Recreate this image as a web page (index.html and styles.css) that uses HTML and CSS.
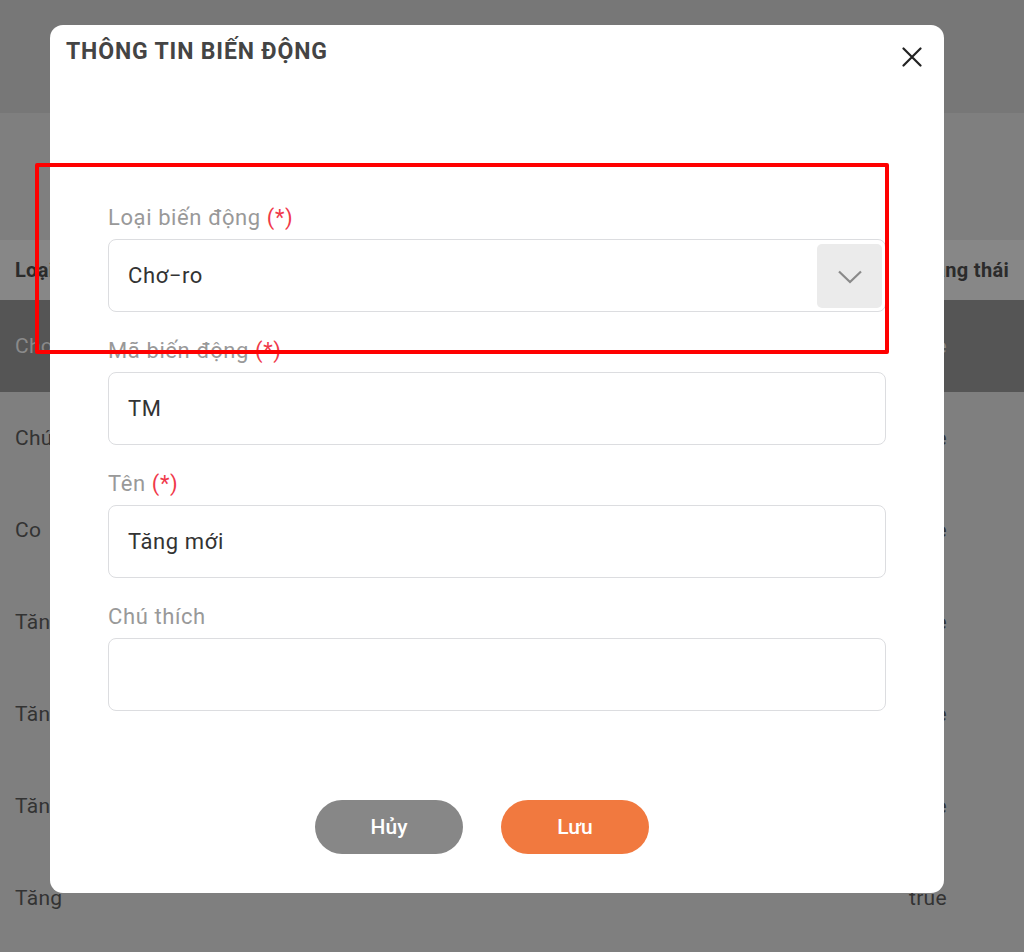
FILE: index.html
```html
<!DOCTYPE html>
<html lang="vi">
<head>
<meta charset="utf-8">
<title>Thông tin biến động</title>
<link rel="stylesheet" href="styles.css">
</head>
<body>
<div class="page">
  <div class="topbar"></div>
  <div class="filters"></div>
  <div class="table">
    <div class="row head"><span class="c1">Loại biến động</span><span class="c2">Trạng thái</span></div>
    <div class="row selected"><span class="c1">Chơ−ro</span><span class="c2">true</span></div>
    <div class="row"><span class="c1">Chú thích</span><span class="c2">true</span></div>
    <div class="row"><span class="c1">Co</span><span class="c2">true</span></div>
    <div class="row"><span class="c1">Tăng mới</span><span class="c2">true</span></div>
    <div class="row"><span class="c1">Tăng khác</span><span class="c2">true</span></div>
    <div class="row"><span class="c1">Tăng</span><span class="c2">true</span></div>
    <div class="row"><span class="c1">Tăng</span><span class="c2">true</span></div>
  </div>
</div>

<div class="modal">
  <div class="modal-head">
    <h2 class="modal-title">THÔNG TIN BIẾN ĐỘNG</h2>
    <button class="close" aria-label="Đóng">
      <svg width="20" height="20" viewBox="0 0 20 20"><path d="M1.5 1.5 L18.5 18.5 M18.5 1.5 L1.5 18.5" stroke="#222" stroke-width="2.2" fill="none" stroke-linecap="round"/></svg>
    </button>
  </div>
  <form class="form">
    <div class="field">
      <label class="label">Loại biến động <span class="req">(*)</span></label>
      <div class="input select">
        <span class="value">Chơ−ro</span>
        <span class="drop">
          <svg width="26" height="16" viewBox="0 0 26 16"><path d="M2 2.5 L13 13 L24 2.5" stroke="#8a8a8a" stroke-width="2.2" fill="none"/></svg>
        </span>
      </div>
    </div>
    <div class="field">
      <label class="label">Mã biến động <span class="req">(*)</span></label>
      <div class="input"><span class="value">TM</span></div>
    </div>
    <div class="field">
      <label class="label">Tên <span class="req">(*)</span></label>
      <div class="input"><span class="value">Tăng mới</span></div>
    </div>
    <div class="field">
      <label class="label">Chú thích</label>
      <div class="input"><span class="value"></span></div>
    </div>
  </form>
  <div class="actions">
    <button class="btn cancel">Hủy</button>
    <button class="btn save">Lưu</button>
  </div>
</div>

<div class="highlight"></div>
</body>
</html>
```

FILE: styles.css
```css
* { box-sizing: border-box; }
html, body { margin: 0; padding: 0; }
body {
  width: 1024px;
  height: 952px;
  overflow: hidden;
  font-family: Roboto, "Noto Sans", "Liberation Sans", sans-serif;
  background: #7f7f7f;
  position: relative;
}

.page { display: flex; flex-direction: column; }
.topbar { height: 113px; background: #777777; }
.filters { height: 127px; background: #7f7f7f; }
.table { display: flex; flex-direction: column; }
.row {
  display: grid;
  grid-template-columns: 894px 1fr;
  align-items: center;
  height: 92px;
  padding-left: 15px;
  font-size: 21px;
  letter-spacing: 0.3px;
  color: #333;
  background: #7f7f7f;
}
.row .c1, .row .c2 { white-space: nowrap; }
.row.head {
  height: 60px;
  background: #878787;
  font-weight: 700;
  font-size: 20px;
  color: #2b2b2b;
}
.row.head .c2 { padding-left: 6px; }
.row.selected { background: #555555; color: #8a8a8a; }

.modal {
  position: absolute;
  left: 50px;
  top: 25px;
  width: 894px;
  height: 868px;
  background: #fff;
  border-radius: 13px;
  display: flex;
  flex-direction: column;
}
.modal-head {
  display: flex;
  justify-content: space-between;
  align-items: flex-start;
  padding: 13px 22px 0 16px;
}
.modal-title {
  margin: 0;
  font-size: 23px;
  line-height: 28px;
  font-weight: 700;
  color: #444;
  letter-spacing: 0.85px;
}
.close {
  border: 0;
  background: none;
  padding: 0;
  margin-top: 9px;
  width: 20px;
  height: 20px;
  display: flex;
}

.form {
  display: flex;
  flex-direction: column;
  gap: 27px;
  padding: 139px 58px 0 58px;
}
.field { display: flex; flex-direction: column; gap: 9px; }
.label {
  font-size: 22px;
  line-height: 24px;
  letter-spacing: 0.6px;
  color: #999;
}
.req { color: #f0394a; }
.input {
  height: 73px;
  border: 1px solid #dcdde0;
  border-radius: 8px;
  display: flex;
  align-items: center;
  padding: 0 3px 0 19px;
  font-size: 22px;
  letter-spacing: 0.6px;
  color: #333;
}
.input .value { flex: 1; }
.drop {
  width: 65px;
  height: 64px;
  background: #ebebeb;
  border-radius: 5px;
  display: flex;
  align-items: center;
  justify-content: center;
  padding-top: 2px;
}

.actions {
  margin-top: auto;
  display: flex;
  justify-content: center;
  gap: 38px;
  padding: 0 30px 39px 0;
}
.btn {
  width: 148px;
  height: 54px;
  border: 0;
  border-radius: 27px;
  color: #fff;
  font-family: Roboto, "Noto Sans", sans-serif;
  font-size: 21px;
  font-weight: 500;
}
.btn.cancel { background: #878787; }
.btn.save { background: #f1793f; }

.highlight {
  position: absolute;
  left: 35px;
  top: 163px;
  width: 854px;
  height: 191px;
  border: 4px solid #ff0000;
  border-radius: 2px;
  pointer-events: none;
}
```
